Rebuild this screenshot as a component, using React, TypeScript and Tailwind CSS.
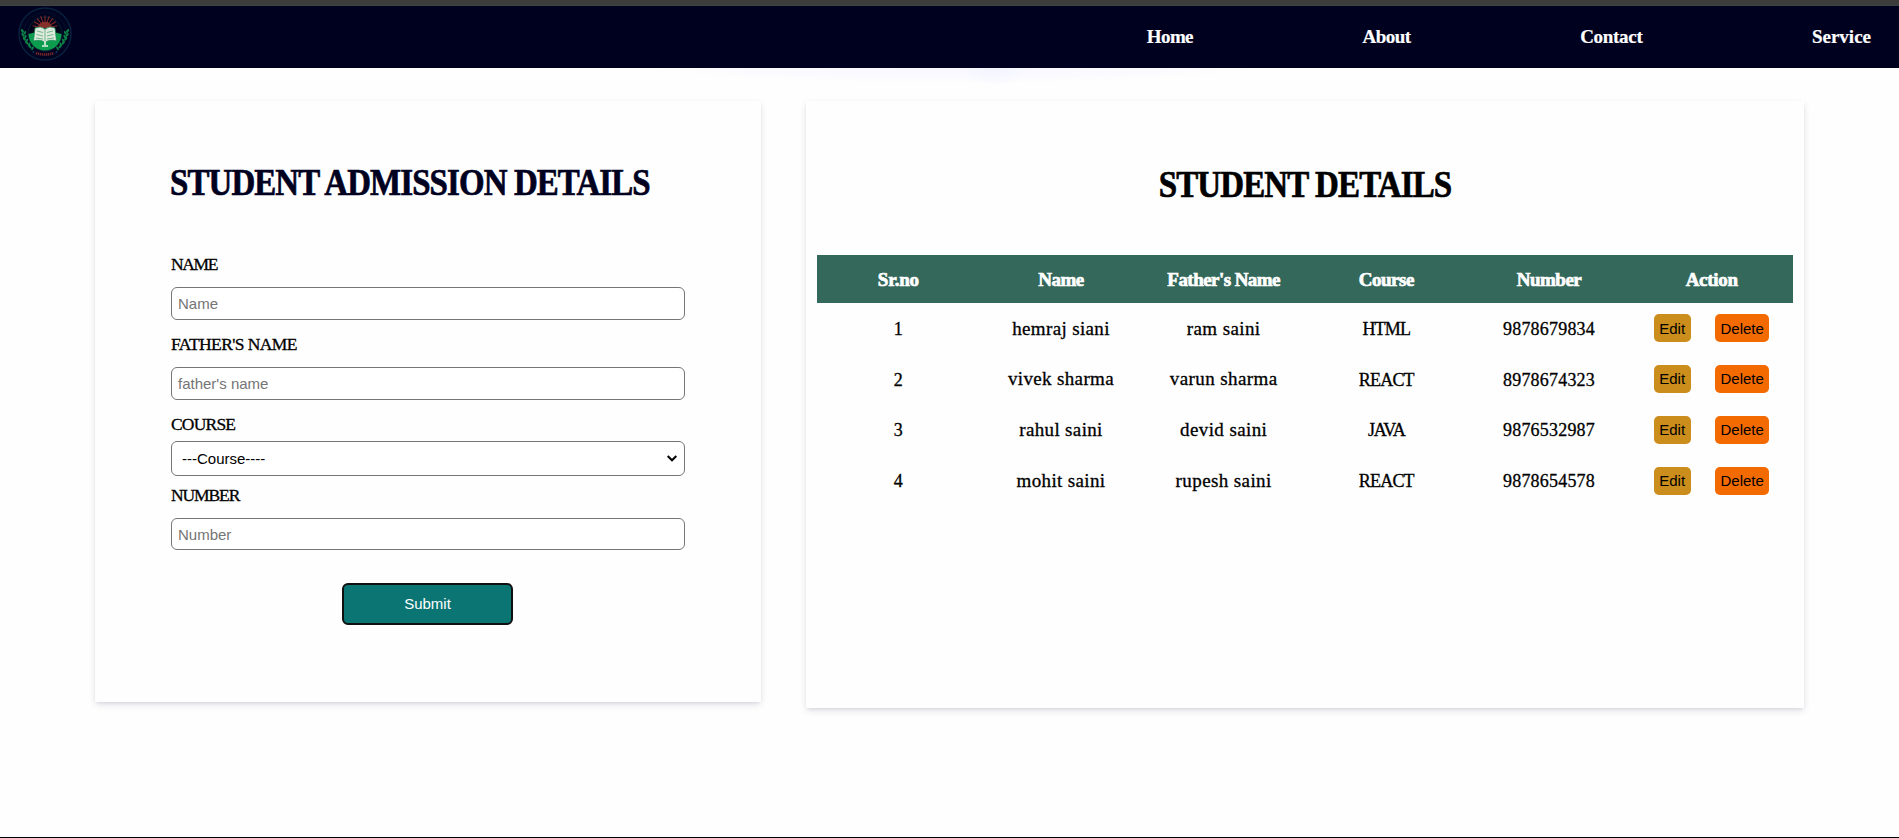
import React from "react";

const links = [
  { label: "Home", cls: "tracking-[-0.6px]" },
  { label: "About", cls: "tracking-[-0.5px]" },
  { label: "Contact", cls: "tracking-[-0.3px]" },
  { label: "Service", cls: "tracking-[0px]" },
];

const columns = [
  { label: "Sr.no", cls: "tracking-[-0.2px]" },
  { label: "Name", cls: "tracking-[-0.5px]" },
  { label: "Father's Name", cls: "tracking-[-0.55px]" },
  { label: "Course", cls: "tracking-[-0.5px]" },
  { label: "Number", cls: "tracking-[-0.5px]" },
  { label: "Action", cls: "tracking-[-0.3px]" },
];

const students = [
  { name: "hemraj siani", father: "ram saini", course: "HTML", number: "9878679834" },
  { name: "vivek sharma", father: "varun sharma", course: "REACT", number: "8978674323" },
  { name: "rahul saini", father: "devid saini", course: "JAVA", number: "9876532987" },
  { name: "mohit saini", father: "rupesh saini", course: "REACT", number: "9878654578" },
];

const serif = "font-['Liberation_Serif',serif]";
const sans = "font-['Liberation_Sans',Arial,sans-serif]";
const cardShadow = "shadow-[0_3px_7px_-1px_rgba(50,50,93,0.18),0_1px_3px_-1px_rgba(0,0,0,0.1)]";
const field =
  "block w-full rounded-[6px] border border-[#767676] bg-white px-1.5 text-[15px] placeholder:text-[#757575] placeholder:opacity-100";

function Logo() {
  const rays = [-80, -60, -40, -20, 0, 20, 40, 60, 80];
  const leaves = [0, 1, 2, 3, 4];
  return (
    <svg width="54" height="54" viewBox="0 0 54 54" className="block">
      <circle cx="27" cy="27" r="26" fill="#000420" stroke="#07223f" strokeWidth="1.4" />
      <circle cx="27" cy="27" r="21.5" fill="none" stroke="#06203a" strokeWidth="0.8" strokeDasharray="1.5 1.2" />
      <circle cx="27" cy="27" r="17" fill="#010419" stroke="#0b2c3e" strokeWidth="0.7" />
      <path d="M10.500 27a16.500 16.500 0 0 0 33 0l-8-2h-17z" fill="#0d9d4f" />
      <g stroke="#8a2828" strokeWidth="1">
        {rays.map((a) => (
          <path key={a} d="M27 14.500V8.500" transform={`rotate(${a} 27 21)`} />
        ))}
      </g>
      <path d="M20 21a7 6.500 0 0 1 14 0z" fill="#87302a" />
      <path d="M17 21q6-2.500 10 1q4-3.500 10-1l1.500 13q-7-2-11.500 1.500q-4.500-3.500-11.500-1.500z" fill="#dcebdc" stroke="#138450" strokeWidth="0.7" />
      <path d="M27 22V35M19 24l6 1.500M18.500 27.500l6.500 1.500M18 31l7 1M35 24l-6 1.500M35.500 27.500l-6.500 1.500M36 31l-7 1" stroke="#4c9f70" strokeWidth="0.7" fill="none" />
      <path d="M27 34v4M24 39h6" stroke="#e4f1e6" strokeWidth="1.6" />
      <g fill="#0d8447">
        {leaves.map((i) => (
          <g key={i} transform={`translate(${4.4 + i * i * 0.48} ${24 + i * 3.9})`}>
            <ellipse rx="1.100" ry="2.200" transform="rotate(-35)" />
            <ellipse cx="3" cy="0.6" rx="1" ry="2" transform="rotate(25)" />
          </g>
        ))}
        {leaves.map((i) => (
          <g key={i} transform={`translate(${49.6 - i * i * 0.48} ${24 + i * 3.9})`}>
            <ellipse rx="1.100" ry="2.200" transform="rotate(35)" />
            <ellipse cx="-3" cy="0.6" rx="1" ry="2" transform="rotate(-25)" />
          </g>
        ))}
      </g>
      <path d="M18 46q9 3 18 0" fill="none" stroke="#762329" strokeWidth="2.600" strokeDasharray="1.300 0.700" />
      <circle cx="15.500" cy="45" r="0.8" fill="#11507a" />
      <circle cx="38.500" cy="45" r="0.8" fill="#11507a" />
    </svg>
  );
}

function Label({ children, className }: { children: React.ReactNode; className: string }) {
  return (
    <label className={`block h-5 text-[17.5px] leading-5 text-black [-webkit-text-stroke:0.3px_black] ${className}`}>
      {children}
    </label>
  );
}

export default function App() {
  return (
    <div className={`flex h-[838px] w-full flex-col overflow-hidden border-b border-black bg-[#fefefe] ${serif}`}>
      <div className="h-1.5 shrink-0 border-b border-[#3c4446] bg-[#3c3c3c]" />
      <header className="flex h-[62px] shrink-0 items-center justify-between bg-[#00001f] pr-7 pl-[18px]">
        <div className="-mt-1.5">
          <Logo />
        </div>
        <nav className="flex gap-[169.5px] text-[19px] leading-6 font-bold text-white [-webkit-text-stroke:0.2px_white]">
          {links.map((l) => (
            <a key={l.label} className={l.cls}>
              {l.label}
            </a>
          ))}
        </nav>
      </header>

      <main className="flex grow items-start gap-[45px] bg-[radial-gradient(ellipse_34px_18px_at_995px_0,#f4f4ff,transparent),radial-gradient(ellipse_300px_15px_at_955px_0,#f8f8ff_0%,#fafaff_60%,transparent_100%)] bg-no-repeat pt-[33px] pl-[95px]">
        <section className={`h-[601px] w-[666px] bg-[#fefefe] px-[76px] pt-[59px] ${cardShadow}`}>
          <h1 className="-ml-px h-[45px] w-[545px] origin-left scale-x-[0.89] text-[37px] leading-[45px] font-bold tracking-[-1px] whitespace-nowrap text-[#00001f] [-webkit-text-stroke:0.7px_#00001f]">
            STUDENT ADMISSION DETAILS
          </h1>
          <form className={`pt-[49px] ${sans}`}>
            <Label className={`mb-[13px] tracking-[-1.4px] ${serif}`}>NAME</Label>
            <input className={`${field} mb-[14px] h-[33px]`} placeholder="Name" />
            <Label className={`mb-[13px] tracking-[-0.6px] ${serif}`}>FATHER'S NAME</Label>
            <input className={`${field} mb-[14px] h-[33px]`} placeholder="father's name" />
            <Label className={`mb-[7px] tracking-[-0.8px] ${serif}`}>COURSE</Label>
            <div className="mb-[9px] flex h-[35px] items-center justify-between rounded-[6px] border border-[#767676] bg-white pr-[7px] pl-2.5 text-[15px] text-black">
              <span className="pt-px">---Course----</span>
              <svg width="10" height="7" viewBox="0 0 10 7" fill="none" stroke="black" strokeWidth="2">
                <path d="M.7 1 5 5.300 9.300 1" />
              </svg>
            </div>
            <Label className={`mb-[13px] tracking-[-1.1px] ${serif}`}>NUMBER</Label>
            <input className={`${field} h-[32px]`} placeholder="Number" />
            <button
              type="button"
              className="mt-[33px] ml-[171px] block h-[42px] w-[171px] rounded-[6px] border-2 border-[#101010] bg-[#0b7574] text-[15px] text-white"
            >
              Submit
            </button>
          </form>
        </section>

        <section className={`h-[607px] w-[998px] bg-[#fefefe] px-[11px] pt-[61px] ${cardShadow}`}>
          <h1 className="h-[45px] scale-x-[0.892] text-center text-[37px] leading-[45px] font-bold tracking-[-1px] text-black [-webkit-text-stroke:0.7px_black]">
            STUDENT DETAILS
          </h1>
          <div className="mt-[48px] grid h-12 grid-cols-6 items-center bg-[#33685b] pt-0.5 text-center text-[19px] font-bold text-white [-webkit-text-stroke:0.7px_white]">
            {columns.map((c) => (
              <div key={c.label} className={c.cls}>
                {c.label}
              </div>
            ))}
          </div>
          {students.map((s, i) => (
            <div
              key={s.name}
              className="grid h-[50.75px] grid-cols-6 items-center text-center text-[19px] text-black [-webkit-text-stroke:0.3px_black]"
            >
              <div className="pt-0.5 text-[18px]">{i + 1}</div>
              <div className="pt-px tracking-[0.35px]">{s.name}</div>
              <div className="pt-px tracking-[0.4px]">{s.father}</div>
              <div className={`pt-0.5 text-[18px] ${s.course === "JAVA" ? "tracking-[-1.2px]" : "tracking-[-0.8px]"}`}>
                {s.course}
              </div>
              <div className="pt-0.5 text-[18px] tracking-[0.2px]">{s.number}</div>
              <div className={`flex justify-center gap-6 text-[15px] [-webkit-text-stroke:0] ${sans}`}>
                <button className="h-7 w-[37px] rounded-[5px] bg-[#cb8d1b] pt-px pr-px">Edit</button>
                <button className="h-7 w-[54px] rounded-[5px] bg-[#f36a00] pt-px">Delete</button>
              </div>
            </div>
          ))}
        </section>
      </main>
    </div>
  );
}
